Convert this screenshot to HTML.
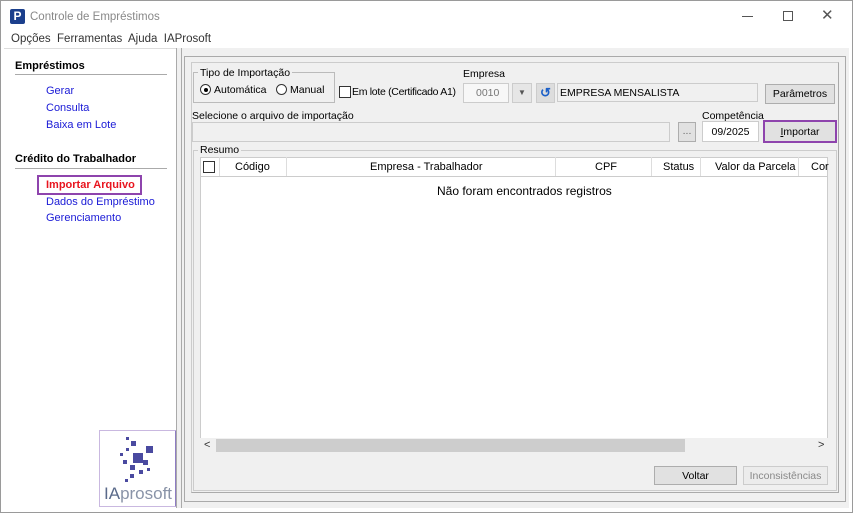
<!DOCTYPE html>
<html><head><meta charset="utf-8"><style>
*{margin:0;padding:0;box-sizing:border-box}
body{width:853px;height:513px;position:relative;background:#fff;font-family:"Liberation Sans",sans-serif;font-size:10.5px;color:#000;overflow:hidden}
.a{position:absolute;white-space:nowrap}
.btn{position:absolute;background:#e1e1e1;border:1px solid #adadad;text-align:center;line-height:18px}
.lk{color:#1a1ad6;font-size:11px}
</style></head><body>
<div class="a" style="left:0;top:0;width:853px;height:513px;border:1px solid #9a9a9a"></div>
<div class="a" style="left:10px;top:9px;width:15px;height:15px;background:#1b3f8c;border-radius:2px;color:#fff;font-weight:bold;font-size:12px;line-height:15px;text-align:center">P</div>
<div class="a" style="left:30px;top:11px;font-size:11.5px;color:#888">Controle de Empréstimos</div>
<div class="a" style="left:742px;top:16px;width:11px;height:1px;background:#555"></div>
<div class="a" style="left:783px;top:11px;width:10px;height:10px;border:1px solid #555"></div>
<div class="a" style="left:821px;top:6px;font-size:15px;color:#555">✕</div>
<div class="a" style="left:11px;top:33px;font-size:11.5px;color:#333">Opções&nbsp; Ferramentas&nbsp; Ajuda&nbsp; IAProsoft</div>
<div class="a" style="left:4px;top:48px;width:845px;height:1px;background:#ddd"></div>
<!-- left -->
<div class="a" style="left:15px;top:60px;font-weight:bold;font-size:11px">Empréstimos</div>
<div class="a" style="left:15px;top:74px;width:152px;height:1px;background:#aaa"></div>
<div class="a lk" style="left:46px;top:85px">Gerar</div>
<div class="a lk" style="left:46px;top:102px">Consulta</div>
<div class="a lk" style="left:46px;top:119px">Baixa em Lote</div>
<div class="a" style="left:15px;top:153px;font-weight:bold;font-size:11px">Crédito do Trabalhador</div>
<div class="a" style="left:15px;top:168px;width:152px;height:1px;background:#aaa"></div>
<div class="a" style="left:37px;top:175px;width:105px;height:20px;border:2px solid #8e44ad"></div>
<div class="a" style="left:46px;top:179px;color:#e8141e;font-weight:bold;font-size:11px">Importar Arquivo</div>
<div class="a lk" style="left:46px;top:196px">Dados do Empréstimo</div>
<div class="a lk" style="left:46px;top:212px">Gerenciamento</div>
<div class="a" style="left:99px;top:430px;width:78px;height:77px;border:1px solid #c9b8e0;border-right:2px solid #8e7cc3;background:#fff"></div>
<svg class="a" style="left:120px;top:437px" width="40" height="46" fill="#4a4aa0">
<rect x="6" y="0" width="3" height="3"/><rect x="11" y="4" width="5" height="5"/><rect x="6" y="11" width="3" height="3"/><rect x="0" y="16" width="3" height="3"/><rect x="26" y="9" width="7" height="7"/><rect x="13" y="16" width="10" height="10"/><rect x="3" y="23" width="4" height="4"/><rect x="10" y="28" width="5" height="5"/><rect x="23" y="23" width="5" height="5"/><rect x="19" y="33" width="4" height="4"/><rect x="10" y="37" width="4" height="4"/><rect x="5" y="42" width="3" height="3"/><rect x="27" y="31" width="3" height="3"/></svg>
<div class="a" style="left:104px;top:484px;font-size:17px;color:#5a6a8a">IA<span style="color:#8a94a8">prosoft</span></div>
<!-- splitter -->
<div class="a" style="left:176px;top:48px;width:6px;height:460px;background:#f0f0f0;border-left:1px solid #aaa;border-right:1px solid #aaa"></div>
<!-- right -->
<div class="a" style="left:182px;top:48px;width:667px;height:460px;background:#f0f0f0"></div>
<div class="a" style="left:184px;top:56px;width:662px;height:446px;border:1px solid #aaa"></div>
<div class="a" style="left:191px;top:62px;width:648px;height:431px;border:1px solid #ccc;border-right-color:#aaa;border-bottom-color:#aaa"></div>
<div class="a" style="left:193px;top:72px;width:142px;height:31px;border:1px solid #bbb"></div>
<div class="a" style="left:198px;top:67px;background:#f0f0f0;padding:0 2px">Tipo de Importação</div>
<div class="a" style="left:200px;top:84px;width:11px;height:11px;border:1px solid #333;border-radius:50%;background:#fff"></div>
<div class="a" style="left:204px;top:88px;width:4px;height:4px;background:#000;border-radius:50%"></div>
<div class="a" style="left:214px;top:84px">Automática</div>
<div class="a" style="left:276px;top:84px;width:11px;height:11px;border:1px solid #333;border-radius:50%;background:#fff"></div>
<div class="a" style="left:290px;top:84px">Manual</div>
<div class="a" style="left:339px;top:86px;width:12px;height:12px;border:1px solid #333;background:#fff"></div>
<div class="a" style="left:352px;top:86px;letter-spacing:-0.3px">Em lote (Certificado A1)</div>
<div class="a" style="left:463px;top:68px">Empresa</div>
<div class="a" style="left:463px;top:83px;width:46px;height:20px;border:1px solid #ccc;background:#f7f7f7;color:#777;line-height:18px;padding-left:12px">0010</div>
<div class="a" style="left:512px;top:83px;width:20px;height:20px;background:#e6e6e6;border:1px solid #ccc;text-align:center;line-height:18px;font-size:8px;color:#555">▼</div>
<div class="a" style="left:536px;top:83px;width:19px;height:20px;background:#ddd;border:1px solid #ccc;color:#1a5fc8;font-weight:bold;text-align:center;line-height:18px;font-size:13px">↺</div>
<div class="a" style="left:557px;top:83px;width:201px;height:19px;border:1px solid #ccc;padding-left:2px;line-height:18px">EMPRESA MENSALISTA</div>
<div class="btn" style="left:765px;top:84px;width:70px;height:20px;line-height:19px">Parâmetros</div>
<div class="a" style="left:192px;top:110px">Selecione o arquivo de importação</div>
<div class="a" style="left:192px;top:122px;width:478px;height:20px;border:1px solid #ccc;background:#f0f0f0"></div>
<div class="btn" style="left:678px;top:122px;width:18px;height:20px;line-height:16px;color:#666">...</div>
<div class="a" style="left:702px;top:110px">Competência</div>
<div class="a" style="left:702px;top:121px;width:57px;height:21px;border:1px solid #ccc;background:#fff;text-align:center;line-height:20px">09/2025</div>
<div class="a" style="left:763px;top:120px;width:74px;height:23px;border:2px solid #8e44ad;background:#e1e1e1;text-align:center;line-height:21px"><u>I</u>mportar</div>
<div class="a" style="left:193px;top:150px;width:644px;height:341px;border:1px solid #ccc"></div>
<div class="a" style="left:198px;top:144px;background:#f0f0f0;padding:0 2px">Resumo</div>
<div class="a" style="left:200px;top:157px;width:628px;height:283px;background:#fff;border:1px solid #ccc"></div>
<div class="a" style="left:200px;top:157px;width:628px;height:20px;border-bottom:1px solid #ccc;font-size:11px;line-height:20px">
<div class="a" style="left:3px;top:4px;width:12px;height:12px;border:1px solid #333"></div>
<div class="a" style="left:19px;top:0;width:1px;height:19px;background:#ddd"></div>
<div class="a" style="left:35px">Código</div>
<div class="a" style="left:86px;top:0;width:1px;height:19px;background:#ddd"></div>
<div class="a" style="left:170px">Empresa - Trabalhador</div>
<div class="a" style="left:355px;top:0;width:1px;height:19px;background:#ddd"></div>
<div class="a" style="left:395px">CPF</div>
<div class="a" style="left:451px;top:0;width:1px;height:19px;background:#ddd"></div>
<div class="a" style="left:463px">Status</div>
<div class="a" style="left:500px;top:0;width:1px;height:19px;background:#ddd"></div>
<div class="a" style="left:515px">Valor da Parcela</div>
<div class="a" style="left:598px;top:0;width:1px;height:19px;background:#ddd"></div>
<div class="a" style="left:611px">Cor</div></div>
<div class="a" style="left:437px;top:184px;font-size:12px">Não foram encontrados registros</div>
<div class="a" style="left:200px;top:438px;width:628px;height:16px;background:#f0f0f0"></div>
<div class="a" style="left:204px;top:439px;font-size:11px;color:#333">&lt;</div>
<div class="a" style="left:216px;top:439px;width:469px;height:13px;background:#cdcdcd"></div>
<div class="a" style="left:818px;top:439px;font-size:11px;color:#333">&gt;</div>
<div class="btn" style="left:654px;top:466px;width:83px;height:19px">Voltar</div>
<div class="btn" style="left:743px;top:466px;width:85px;height:19px;color:#888;background:#ececec;border-color:#ccc">Inconsistências</div>
</body></html>
